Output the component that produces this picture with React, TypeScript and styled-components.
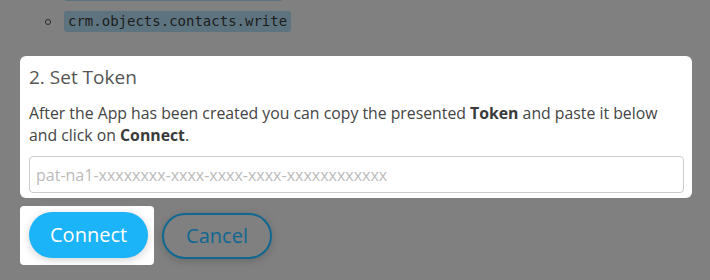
import React from "react";
import styled, { createGlobalStyle } from "styled-components";

const GlobalStyle = createGlobalStyle`
  html, body {
    margin: 0;
    padding: 0;
    background: #808080;
    overflow: hidden;
  }
  body {
    font-family: "Open Sans", "Noto Sans", sans-serif;
  }
`;

const Page = styled.div`
  width: 710px;
  height: 280px;
  padding: 0 18px 0 20px;
  box-sizing: border-box;
  overflow: hidden;
`;

const ScopeList = styled.ul`
  list-style: none;
  margin: -25px 0 0;
  padding: 0 0 0 25px;
`;

const ScopeItem = styled.li`
  display: flex;
  align-items: center;
  height: 31px;
  gap: 13px;

  &::before {
    content: "";
    width: 4px;
    height: 4px;
    border: 1px solid #2a2a2a;
    border-radius: 50%;
    margin-top: 1px;
  }
`;

const Code = styled.code`
  display: inline-block;
  height: 21px;
  line-height: 21px;
  padding: 0 4px;
  border-radius: 3px;
  background: #5d7480;
  color: #1c1c1c;
  font-family: "DejaVu Sans Mono", "Liberation Mono", monospace;
  font-size: 14px;
`;

const Card = styled.section`
  margin-top: 19px;
  background: #ffffff;
  border-radius: 6px;
  padding: 8px 8px 5px 9px;
`;

const Title = styled.h2`
  margin: 0;
  font-size: 19px;
  line-height: 26px;
  font-weight: 400;
  color: #555555;
`;

const Text = styled.p`
  margin: 12px 0 0;
  font-size: 15.8px;
  line-height: 22px;
  color: #444444;

  strong {
    font-weight: 700;
    color: #3a3a3a;
  }
`;

const TokenInput = styled.input`
  display: block;
  box-sizing: border-box;
  width: 100%;
  height: 37px;
  margin-top: 10px;
  padding: 0 6px;
  border: 1px solid #cccccc;
  border-radius: 4px;
  font-family: "Open Sans", "Noto Sans", sans-serif;
  font-size: 16px;
  color: #444;
  outline: none;

  &::placeholder {
    color: #bbbbbb;
  }
`;

const Actions = styled.div`
  display: flex;
  align-items: center;
  gap: 8px;
  margin-top: 8px;
`;

const Highlight = styled.div`
  display: flex;
  background: #ffffff;
  border-radius: 4px;
  padding: 6px 6px 7px 9px;
`;

const Button = styled.button<{ $primary?: boolean }>`
  box-sizing: border-box;
  height: 46px;
  padding: 0 ${(p) => (p.$primary ? "21px" : "22px")};
  border-radius: 23px;
  font-family: "Open Sans", "Noto Sans", sans-serif;
  font-size: 20px;
  line-height: 1;
  cursor: pointer;
  box-shadow: 0 2px 8px rgba(0, 0, 0, 0.18);
  border: ${(p) => (p.$primary ? "none" : "2.5px solid #0f6792")};
  background: ${(p) => (p.$primary ? "#1bb4f8" : "transparent")};
  color: ${(p) => (p.$primary ? "#ffffff" : "#0f6792")};
`;

export default function App() {
  return (
    <>
      <GlobalStyle />
      <Page>
        <ScopeList>
          <ScopeItem>
            <Code>crm.objects.contacts.read</Code>
          </ScopeItem>
          <ScopeItem>
            <Code>crm.objects.contacts.write</Code>
          </ScopeItem>
        </ScopeList>
        <Card>
          <Title>2. Set Token</Title>
          <Text>
            After the App has been created you can copy the presented <strong>Token</strong> and paste it below
            and click on <strong>Connect</strong>.
          </Text>
          <TokenInput placeholder="pat-na1-xxxxxxxx-xxxx-xxxx-xxxx-xxxxxxxxxxxx" />
        </Card>
        <Actions>
          <Highlight>
            <Button $primary>Connect</Button>
          </Highlight>
          <Button>Cancel</Button>
        </Actions>
      </Page>
    </>
  );
}
